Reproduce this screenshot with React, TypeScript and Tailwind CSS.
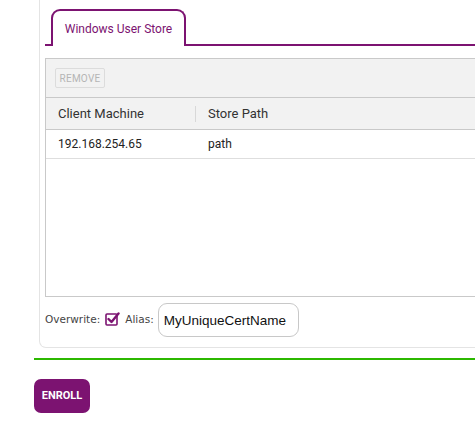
import React from 'react'

const rows = [{ machine: '192.168.254.65', path: 'path' }]

function CheckMark() {
  return (
    <svg width="15" height="14" viewBox="0 0 15 14" className="block">
      <rect x="1" y="2" width="11" height="11" rx="1" fill="none" stroke="#7c1371" strokeWidth="1.6" />
      <path d="M3.5 7 L6.5 10 L13.5 1.5" fill="none" stroke="#7c1371" strokeWidth="2.4" strokeLinecap="round" strokeLinejoin="round" />
    </svg>
  )
}

export default function App() {
  return (
    <div className="w-[475px] h-[444px] overflow-hidden bg-white" style={{ fontFamily: 'Roboto, sans-serif' }}>
      <div className="pl-[34px] w-[700px]">
        {/* card */}
        <div className="ml-[5px] border border-t-0 border-[#e4e4e4] rounded-b-[7px] pl-[5px] pb-[10px]">
          {/* tabs */}
          <div className="pt-[9px] border-b-2 border-[#7c1371] flex">
            <div className="ml-[6px] -mb-[2px] w-[135px] h-[37px] border-2 border-b-0 border-[#7c1371] rounded-t-[9px] bg-white flex items-center justify-center">
              <span className="text-[12px] text-[#7c1371]">Windows User Store</span>
            </div>
          </div>

          {/* grid */}
          <div className="mt-[12px] h-[239px] border border-[#c9c9c9] flex flex-col">
            <div className="h-[39px] bg-[#f2f2f2] border-b border-[#c9c9c9] flex items-center pl-[9px]">
              <button className="h-[20px] w-[50px] border border-[#dcdcdc] rounded-[2px] text-[10px] tracking-wide text-[#b5b5b5]">
                REMOVE
              </button>
            </div>
            <div className="h-[32px] bg-[#f2f2f2] border-b border-[#c9c9c9] flex items-center text-[13px] text-[#333]">
              <div className="w-[150px] pl-[12px] border-r border-[#d8d8d8] leading-[16px]">Client Machine</div>
              <div className="pl-[12px]">Store Path</div>
            </div>
            {rows.map(r => (
              <div key={r.machine} className="h-[29px] border-b border-[#dedede] flex items-center text-[12px] text-[#222]">
                <div className="w-[150px] pl-[12px]">{r.machine}</div>
                <div className="pl-[12px]">{r.path}</div>
              </div>
            ))}
            <div className="flex-1" />
          </div>

          {/* options */}
          <div className="mt-[6px] flex items-center text-[10.5px] text-[#444]" style={{ fontFamily: '"DejaVu Sans", sans-serif' }}>
            <span>Overwrite:</span>
            <span className="ml-[5px] -mt-[2px]"><CheckMark /></span>
            <span className="ml-[5px]">Alias:</span>
            <input
              defaultValue="MyUniqueCertName"
              className="ml-[4px] w-[141px] h-[34px] border border-[#c8c8c8] rounded-[9px] px-[5px] text-[13.5px] text-[#111] outline-none"
              style={{ fontFamily: '"Liberation Sans", Arial, sans-serif' }}
            />
          </div>
        </div>

        {/* divider */}
        <div className="mt-[10px] h-[2px] bg-[#2cb800]" />

        <button className="mt-[19px] w-[56px] h-[34px] rounded-[7px] bg-[#7c1371] text-white text-[11px] font-bold">
          ENROLL
        </button>
      </div>
    </div>
  )
}
